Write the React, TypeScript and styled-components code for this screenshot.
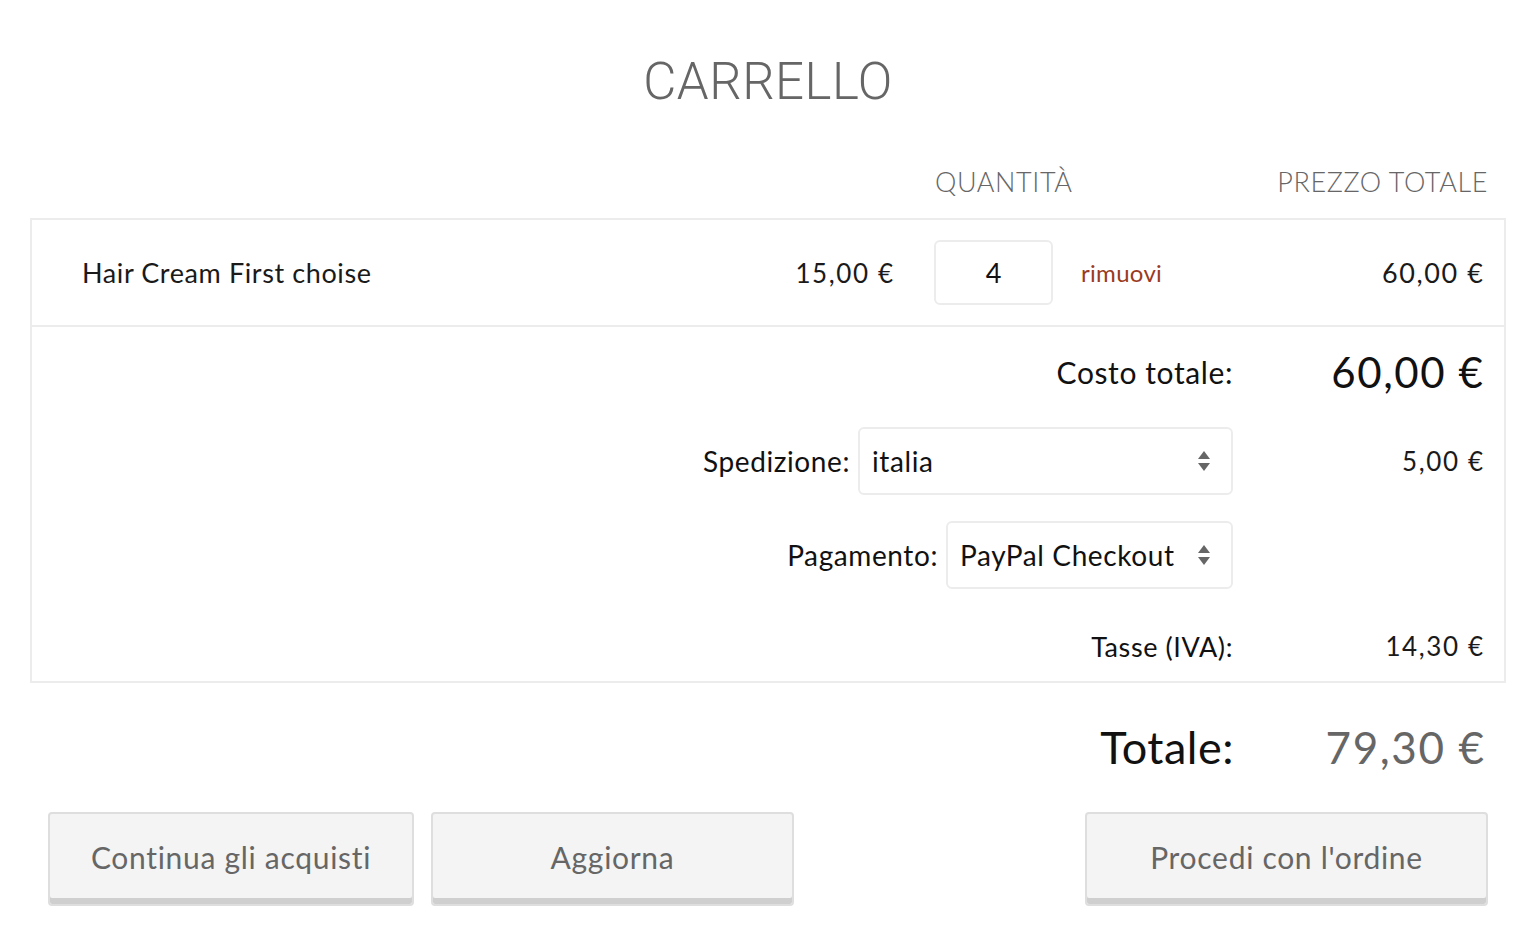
import React from "react";
import styled, { createGlobalStyle } from "styled-components";

const GlobalStyle = createGlobalStyle`
  html, body {
    margin: 0;
    padding: 0;
    background: #fff;
  }
  body {
    font-family: "Lato", "Open Sans", sans-serif;
    color: #111;
  }
  * { box-sizing: border-box; }
`;

const Page = styled.div`
  width: 1536px;
  height: 938px;
  padding: 50px 30px 0 30px;
  overflow: hidden;
`;

const Title = styled.h1`
  margin: 0;
  text-align: center;
  font-family: "Roboto", sans-serif;
  font-weight: 300;
  font-size: 51px;
  line-height: 64px;
  color: #666;
  letter-spacing: 0.5px;
`;

// name | price | qty | remove | total
const cols = "1fr 193px 160px 207px 223px";

const HeaderRow = styled.div`
  display: grid;
  grid-template-columns: ${cols};
  padding: 0 18px 18px 52px;
  margin-top: 48px;
  height: 56px;
  align-items: center;
  font-size: 27px;
  letter-spacing: 0.6px;
  color: #666;
  font-weight: 300;
  text-transform: uppercase;
`;

const HeadCell = styled.div<{ $col: string; $align?: string; $pad?: number }>`
  grid-column: ${(p) => p.$col};
  text-align: ${(p) => p.$align || "left"};
  padding-left: ${(p) => p.$pad || 0}px;
  white-space: nowrap;
`;

const Table = styled.div`
  border: 2px solid #ececec;
`;

const ItemRow = styled.div`
  display: grid;
  grid-template-columns: ${cols};
  padding: 0 21px 0 50px;
  height: 107px;
  align-items: center;
  border-bottom: 2px solid #ececec;
  color: #1a1a1a;
`;

const ItemName = styled.div`
  font-size: 27px;
  letter-spacing: 0.6px;
`;

const Money = styled.div<{ $size?: number; $color?: string }>`
  text-align: right;
  font-size: ${(p) => p.$size || 26}px;
  letter-spacing: 1.6px;
  margin-right: -1.6px;
  color: ${(p) => p.$color || "#1a1a1a"};
  white-space: nowrap;
`;

const QtyWrap = styled.div`
  padding-left: 41px;
`;

const QtyInput = styled.input`
  width: 119px;
  height: 65px;
  border: 2px solid #ececec;
  border-radius: 6px;
  text-align: center;
  font-family: inherit;
  font-size: 27px;
  color: #111;
  background: #fff;
  outline: none;
`;

const Remove = styled.a`
  padding-left: 28px;
  color: #9b3a24;
  font-size: 24px;
  letter-spacing: 0.3px;
  text-decoration: none;
  white-space: nowrap;
`;

const Summary = styled.div`
  display: flex;
  flex-direction: column;
  padding: 24px 21px 18px 0;
`;

const SumRow = styled.div<{ $top?: number; $h: number }>`
  display: flex;
  justify-content: flex-end;
  align-items: center;
  height: ${(p) => p.$h}px;
  margin-top: ${(p) => p.$top || 0}px;
`;

const SumLabel = styled.div<{ $size?: number }>`
  display: flex;
  align-items: center;
  gap: 8px;
  font-size: ${(p) => p.$size || 28}px;
  letter-spacing: 0.6px;
  color: #111;
  white-space: nowrap;
`;

const ValueCol = styled.div`
  width: 250px;
`;

const Select = styled.div<{ $w: number }>`
  width: ${(p) => p.$w}px;
  height: 68px;
  border: 2px solid #ececec;
  border-radius: 6px;
  display: flex;
  align-items: center;
  justify-content: space-between;
  padding: 0 20px 0 12px;
  font-size: 28px;
  letter-spacing: 0.6px;
  color: #111;
`;

const Arrows = () => (
  <svg width="14" height="24" viewBox="0 0 14 24">
    <path d="M7 2 L13 10 L1 10 Z" fill="#666" />
    <path d="M7 22 L13 14 L1 14 Z" fill="#666" />
  </svg>
);

const GrandRow = styled.div`
  display: flex;
  justify-content: flex-end;
  align-items: center;
  height: 72px;
  margin-top: 28px;
  padding-right: 22px;
`;

const GrandLabel = styled.div`
  font-size: 45px;
  letter-spacing: 0.5px;
  color: #111;
`;

const Buttons = styled.div`
  display: flex;
  align-items: flex-start;
  margin-top: 29px;
  padding: 0 18px;
  gap: 17px;
`;

const Spacer = styled.div`
  flex: 1;
`;

const Button = styled.button<{ $w: number }>`
  width: ${(p) => p.$w}px;
  height: 94px;
  background: #f4f4f4;
  border: 2px solid #dedede;
  border-radius: 4px;
  box-shadow: inset 0 -6px 0 #cfcfcf;
  padding-bottom: 6px;
  font-family: inherit;
  font-size: 30px;
  letter-spacing: 0.7px;
  color: #666;
  cursor: pointer;
`;

export default function App() {
  return (
    <>
      <GlobalStyle />
      <Page>
        <Title>CARRELLO</Title>
        <HeaderRow>
          <HeadCell $col="3 / 5" $pad={37}>Quantità</HeadCell>
          <HeadCell $col="5 / 6" $align="right">Prezzo totale</HeadCell>
        </HeaderRow>
        <Table>
          <ItemRow>
            <ItemName>Hair Cream First choise</ItemName>
            <Money>15,00 €</Money>
            <QtyWrap>
              <QtyInput defaultValue="4" />
            </QtyWrap>
            <Remove href="#">rimuovi</Remove>
            <Money $size={27}>60,00 €</Money>
          </ItemRow>
          <Summary>
            <SumRow $h={42}>
              <SumLabel $size={30}>Costo totale:</SumLabel>
              <ValueCol>
                <Money $size={42} $color="#111">60,00 €</Money>
              </ValueCol>
            </SumRow>
            <SumRow $h={68} $top={34}>
              <SumLabel>
                Spedizione:
                <Select $w={375}>
                  <span>italia</span>
                  <Arrows />
                </Select>
              </SumLabel>
              <ValueCol>
                <Money>5,00 €</Money>
              </ValueCol>
            </SumRow>
            <SumRow $h={69} $top={25}>
              <SumLabel>
                Pagamento:
                <Select $w={287}>
                  <span>PayPal Checkout</span>
                  <Arrows />
                </Select>
              </SumLabel>
              <ValueCol />
            </SumRow>
            <SumRow $h={34} $top={40}>
              <SumLabel $size={27}>Tasse (IVA):</SumLabel>
              <ValueCol>
                <Money>14,30 €</Money>
              </ValueCol>
            </SumRow>
          </Summary>
        </Table>
        <GrandRow>
          <GrandLabel>Totale:</GrandLabel>
          <ValueCol>
            <Money $size={44} $color="#666">79,30 €</Money>
          </ValueCol>
        </GrandRow>
        <Buttons>
          <Button $w={366}>Continua gli acquisti</Button>
          <Button $w={363}>Aggiorna</Button>
          <Spacer />
          <Button $w={403}>Procedi con l'ordine</Button>
        </Buttons>
      </Page>
    </>
  );
}
